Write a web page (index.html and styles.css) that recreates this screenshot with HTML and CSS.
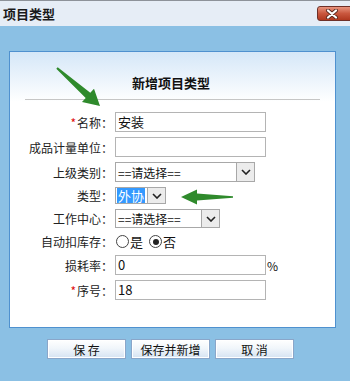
FILE: index.html
```html
<!DOCTYPE html>
<html lang="zh-CN">
<head>
  <meta charset="UTF-8" />
  <title>项目类型</title>
  <link rel="stylesheet" href="styles.css">
</head>
<body>
  <div class="titlebar">
    <span class="title">项目类型</span>
    <span class="close-btn">
      <svg width="14" height="10" viewBox="0 0 14 10">
        <path d="M3 1.5 L11 8.5 M11 1.5 L3 8.5" stroke="#5a2a22" stroke-width="4" stroke-linecap="round"/>
        <path d="M3 1.5 L11 8.5 M11 1.5 L3 8.5" stroke="#ffffff" stroke-width="2.2" stroke-linecap="round"/>
      </svg>
    </span>
  </div>

  <div class="panel">
    <h2>新增项目类型</h2>
    <div class="rule"></div>

    <div class="form">
      <div class="row h20">
        <label class="lbl"><span class="req">*</span>名称：</label>
        <span class="input">安装</span>
      </div>
      <div class="row h20">
        <label class="lbl">成品计量单位：</label>
        <span class="input"></span>
      </div>
      <div class="row h20">
        <label class="lbl">上级类别：</label>
        <span class="select w140"><span class="sel-text">==请选择==</span><span class="sel-btn"><svg width="10" height="6" viewBox="0 0 10 6"><path d="M1 1 L5 5 L9 1" fill="none" stroke="#222" stroke-width="1.6"/></svg></span></span>
      </div>
      <div class="row h17">
        <label class="lbl">类型：</label>
        <span class="select w51"><span class="sel-text picked">外协</span><span class="sel-btn"><svg width="10" height="6" viewBox="0 0 10 6"><path d="M1 1 L5 5 L9 1" fill="none" stroke="#222" stroke-width="1.6"/></svg></span></span>
      </div>
      <div class="row h19">
        <label class="lbl">工作中心：</label>
        <span class="select w105"><span class="sel-text">==请选择==</span><span class="sel-btn"><svg width="10" height="6" viewBox="0 0 10 6"><path d="M1 1 L5 5 L9 1" fill="none" stroke="#222" stroke-width="1.6"/></svg></span></span>
      </div>
      <div class="row h17">
        <label class="lbl">自动扣库存：</label>
        <span class="radios">
          <span class="radio"></span><span class="opt">是</span>
          <span class="radio on"></span><span class="opt">否</span>
        </span>
      </div>
      <div class="row h20">
        <label class="lbl">损耗率：</label>
        <span class="input">0</span><span class="unit">%</span>
      </div>
      <div class="row h20">
        <label class="lbl"><span class="req">*</span>序号：</label>
        <span class="input">18</span>
      </div>
    </div>
  </div>

  <div class="buttons">
    <button type="button">保 存</button>
    <button type="button">保存并新增</button>
    <button type="button">取 消</button>
  </div>

  <svg class="arrows" width="350" height="381" viewBox="0 0 350 381">
    <polygon fill="#2f8a2c" points="57.7,67.3 90.3,92.8 94,88.7 100,106 82,102.1 85.7,98 56.3,68.7"/>
    <polygon fill="#2f8a2c" points="181,197 197,189.5 197,193.5 233,196.3 233,197.7 197,200.5 197,204.5"/>
  </svg>
</body>
</html>
```

FILE: styles.css
```css
body {
  margin: 0;
  background-color: #8bc0e4;
  font-family: "Noto Sans CJK SC", "Liberation Sans", sans-serif;
  font-size: 12px;
  color: #111;
  position: relative;
}
.titlebar {
  height: 25px;
  border-top: 1px solid #8d9299;
  background-color: #e6edf6;
  display: flex;
  align-items: center;
  justify-content: space-between;
}
.title {
  font-weight: bold;
  font-size: 13px;
  margin-left: 3px;
  color: #1a1a1a;
}
.close-btn {
  width: 30px;
  height: 13px;
  margin-right: -6px;
  border: 1px solid #6e3028;
  border-radius: 3px;
  background: linear-gradient(#e8947e, #c9573e 50%, #b0381f);
  display: flex;
  align-items: center;
  padding-left: 7px;
  box-sizing: content-box;
}
.panel {
  margin: 25px 0 0 9px;
  width: 327px;
  height: 277px;
  box-sizing: border-box;
  border: 1px solid #4f91cf;
  background: linear-gradient(#d5e7f8, #ffffff 50px);
  padding-top: 23px;
}
h2 {
  margin: 0;
  font-size: 13px;
  line-height: 16px;
  text-align: center;
  font-weight: bold;
  color: #111;
  padding-right: 3px;
}
.rule {
  margin: 8px 15px 0 15px;
  border-top: 1px solid #c6c6c6;
}
.form {
  margin-top: 12px;
  display: flex;
  flex-direction: column;
  gap: 5px;
}
.row {
  display: flex;
  align-items: center;
}
.h20 { height: 20px; }
.h19 { height: 19px; }
.h17 { height: 17px; }
.lbl {
  width: 103px;
  text-align: right;
  margin-right: 2px;
  white-space: nowrap;
  color: #222;
}
.req {
  color: #e01010;
  margin-right: 1px;
}
.input {
  width: 151px;
  height: 20px;
  box-sizing: border-box;
  border: 1px solid #b4b4b4;
  background: #fff;
  font-size: 13px;
  line-height: 18px;
  padding-left: 2px;
}
.unit {
  margin-left: 1px;
  font-size: 12px;
}
.select {
  height: 100%;
  box-sizing: border-box;
  border: 1px solid #a8a8a8;
  background: #fff;
  display: flex;
  align-items: center;
  justify-content: space-between;
  font-size: 12px;
}
.w140 { width: 140px; }
.w51 { width: 51px; }
.w105 { width: 105px; }
.sel-text {
  padding-left: 2px;
  line-height: 15px;
}
.sel-text.picked {
  background-color: #3399ff;
  color: #fff;
  margin-left: 1px;
  padding: 0 1px;
  font-size: 13px;
}
.sel-btn {
  width: 18px;
  height: 100%;
  box-sizing: border-box;
  border-left: 1px solid #a8a8a8;
  background: #ececec;
  display: flex;
  align-items: center;
  justify-content: center;
}
.radios {
  display: flex;
  align-items: center;
  margin-left: 1px;
}
.radio {
  width: 11px;
  height: 11px;
  border: 1px solid #444;
  border-radius: 50%;
  background: #fff;
  position: relative;
}
.radio.on::after {
  content: "";
  position: absolute;
  left: 2.5px;
  top: 2.5px;
  width: 6px;
  height: 6px;
  border-radius: 50%;
  background: #222;
}
.opt {
  margin: 0 6px 0 1px;
  font-size: 13px;
}
.buttons {
  margin: 11px 0 0 47px;
  display: flex;
  gap: 5px;
}
button {
  width: 79px;
  height: 20px;
  padding: 0;
  border: 1px solid #8aa6c9;
  background: linear-gradient(#ffffff, #f1f6fb 45%, #d5e3f2);
  font-family: "Noto Sans CJK SC", "Liberation Sans", sans-serif;
  font-size: 12px;
  color: #111;
  box-shadow: inset 0 0 0 1px #ffffff;
}
.arrows {
  position: absolute;
  left: 0;
  top: 0;
  pointer-events: none;
}
```
